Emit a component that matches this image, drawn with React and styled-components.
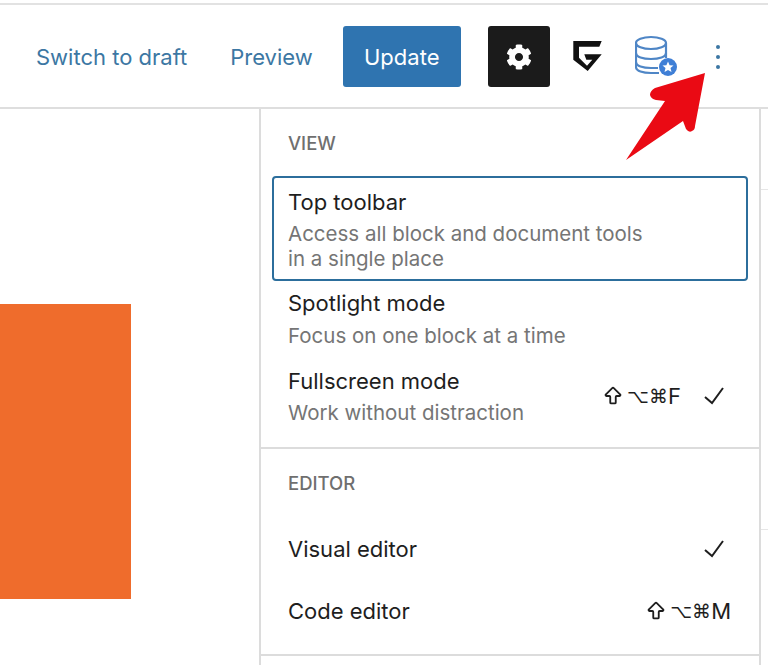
import React from 'react'
import styled, { createGlobalStyle } from 'styled-components'
import { FaCog } from 'react-icons/fa'
import { ArrowBigUp } from 'lucide-react'

const GlobalStyle = createGlobalStyle`
  html, body {
    margin: 0;
    padding: 0;
    background: #fff;
  }
  * {
    box-sizing: border-box;
  }
`

const Page = styled.div`
  position: relative;
  width: 768px;
  height: 665px;
  overflow: hidden;
  background: #fff;
  padding-top: 3px;
  font-family: Inter, "Noto Sans", sans-serif;
  color: #1e1e1e;
`

const TopRule = styled.div`
  height: 2px;
  background: #e2e2e2;
`

const Toolbar = styled.header`
  height: 104px;
  display: flex;
  align-items: center;
  padding: 1px 0 0 36px;
  border-bottom: 2px solid #dedede;
`

const LinkButton = styled.a`
  font-size: 22px;
  color: #3c77a3;
  margin-right: ${p => p.$gap}px;
`

const UpdateButton = styled.button`
  width: 118px;
  height: 61px;
  border: 0;
  border-radius: 3px;
  background: #2f74b0;
  color: #fff;
  font: inherit;
  font-size: 22px;
  margin-right: 27px;
  padding: 0;
`

const GearButton = styled.div`
  width: 62px;
  height: 61px;
  border-radius: 3px;
  background: #1b1b1b;
  color: #fff;
  display: flex;
  align-items: center;
  justify-content: center;
  font-size: 26px;
  margin-right: 23px;
`

const ToolIcon = styled.svg`
  flex: none;
  margin-right: ${p => p.$gap}px;
`

const Body = styled.div`
  display: flex;
  height: 556px;
`

const Canvas = styled.div`
  width: 259px;
  padding-top: 195px;
`

const OrangeBlock = styled.div`
  width: 131px;
  height: 295px;
  background: #ef6c2c;
`

const Menu = styled.div`
  width: 502px;
  border-left: 2px solid #dcdcdc;
  border-right: 2px solid #dcdcdc;
  height: 100%;
`

const Sidebar = styled.aside`
  flex: 1;
`

const SidebarSection = styled.div`
  height: ${p => p.$height}px;
  border-bottom: 1px solid #e6e6e6;
`

const Group = styled.section`
  padding: ${p => p.$pad};
  border-bottom: 2px solid #dcdcdc;
`

const GroupLabel = styled.div`
  font-size: 18.5px;
  font-weight: 500;
  line-height: 24px;
  color: #6f6f6f;
  padding-left: 27px;
  margin-bottom: ${p => p.$gap}px;
`

const Item = styled.div`
  display: flex;
  align-items: ${p => (p.$center ? 'center' : 'flex-start')};
  justify-content: space-between;
  margin: 0 11px;
  padding: ${p => p.$pad};
  border: 2px solid ${p => (p.$active ? '#2c6e9c' : 'transparent')};
  border-radius: 4px;
`

const ItemText = styled.div`
  display: flex;
  flex-direction: column;
`

const ItemTitle = styled.div`
  font-size: 22px;
  line-height: 30px;
  color: #1e1e1e;
`

const ItemDesc = styled.div`
  font-size: 20.5px;
  line-height: 25px;
  color: #757575;
  margin-top: ${p => p.$gap || 4}px;
`

const Trailing = styled.div`
  display: flex;
  align-items: center;
  align-self: center;
`

const Shortcut = styled.span`
  display: flex;
  align-items: center;
  font-size: 22px;
  color: #1e1e1e;
`

const SymbolKeys = styled.span`
  font-family: "DejaVu Sans", sans-serif;
  font-size: 19px;
  margin-left: 3px;
`

const Check = styled.svg`
  margin: 0 6px 0 ${p => p.$gap}px;
  flex: none;
`

const RedArrow = styled.svg`
  position: absolute;
  left: 620px;
  top: 68px;
`

const CheckMark = ({ gap }) => (
  <Check $gap={gap} width="22" height="22" viewBox="0 0 22 22" fill="none">
    <path d="M2 12 L9 18 L20 3" stroke="#1e1e1e" strokeWidth="2" />
  </Check>
)

const Keys = ({ last }) => (
  <Shortcut>
    <ArrowBigUp size={22} strokeWidth={2} />
    <SymbolKeys>⌥⌘</SymbolKeys>
    {last}
  </Shortcut>
)

export default function App() {
  return (
    <Page>
      <GlobalStyle />
      <TopRule />
      <Toolbar>
        <LinkButton $gap={43}>Switch to draft</LinkButton>
        <LinkButton $gap={30}>Preview</LinkButton>
        <UpdateButton>Update</UpdateButton>
        <GearButton>
          <FaCog />
        </GearButton>
        <ToolIcon $gap={32} width="30" height="31" viewBox="0 0 30 31">
          <path
            d="M0.3 0 H28.7 L26.3 5.7 H6 V16.7 L14 24.7 L19.3 18.7 H13.3 L11.3 13.3 H28.7 L14.7 30 L0.3 18.7 Z"
            fill="#111"
          />
        </ToolIcon>
        <ToolIcon $gap={36} width="44" height="44" viewBox="0 0 44 44" fill="none">
          <g stroke="#4f86c6" strokeWidth="2.2">
            <ellipse cx="16" cy="8" rx="15" ry="6" />
            <path d="M1 8 V32 C1 36 8 38 16 38 H24" />
            <path d="M31 8 V23" />
            <path d="M1 18 C1 22 8 24 16 24 C24 24 31 22 31 18" />
            <path d="M1 27 C1 31 8 33 16 33 H23" />
          </g>
          <circle cx="33" cy="32" r="9" fill="#3f7fd6" />
          <path
            d="M33 26.5 L34.6 30.2 L38.5 30.5 L35.5 33 L36.5 37 L33 34.9 L29.5 37 L30.5 33 L27.5 30.5 L31.4 30.2 Z"
            fill="#fff"
          />
        </ToolIcon>
        <ToolIcon $gap={0} width="6" height="26" viewBox="0 0 6 26">
          <circle cx="3" cy="3" r="2" fill="#3c77a3" />
          <circle cx="3" cy="13" r="2" fill="#3c77a3" />
          <circle cx="3" cy="23" r="2" fill="#3c77a3" />
        </ToolIcon>
      </Toolbar>
      <Body>
        <Canvas>
          <OrangeBlock />
        </Canvas>
        <Menu>
          <Group $pad="22px 0 20px">
            <GroupLabel $gap={21}>VIEW</GroupLabel>
            <Item $active $pad="9px 15px 8px 14px">
              <ItemText>
                <ItemTitle>Top toolbar</ItemTitle>
                <ItemDesc>
                  Access all block and document tools
                  <br />
                  in a single place
                </ItemDesc>
              </ItemText>
            </Item>
            <Item $pad="5px 15px 0 14px">
              <ItemText>
                <ItemTitle>Spotlight mode</ItemTitle>
                <ItemDesc $gap={5}>Focus on one block at a time</ItemDesc>
              </ItemText>
            </Item>
            <Item $pad="14px 15px 0 14px">
              <ItemText>
                <ItemTitle>Fullscreen mode</ItemTitle>
                <ItemDesc>Work without distraction</ItemDesc>
              </ItemText>
              <Trailing>
                <Keys last="F" />
                <CheckMark gap={22} />
              </Trailing>
            </Item>
          </Group>
          <Group $pad="22px 0 26px">
            <GroupLabel $gap={37}>EDITOR</GroupLabel>
            <Item $center $pad="0 15px 0 14px">
              <ItemTitle>Visual editor</ItemTitle>
              <CheckMark gap={0} />
            </Item>
            <Item $center $pad="28px 15px 0 14px">
              <ItemTitle>Code editor</ItemTitle>
              <Keys last="M" />
            </Item>
          </Group>
        </Menu>
        <Sidebar>
          <SidebarSection $height={81} />
          <SidebarSection $height={340} />
        </Sidebar>
      </Body>
      <RedArrow width="90" height="100" viewBox="0 0 90 100">
        <path
          d="M85 5 L35 20 Q30 23 30 27 Q31 31 36 32 L45 33 L6 92 L63 53 L66 61 Q69 65 72 63 Q75 62 75 58 Z"
          fill="#ea0a14"
        />
      </RedArrow>
    </Page>
  )
}
